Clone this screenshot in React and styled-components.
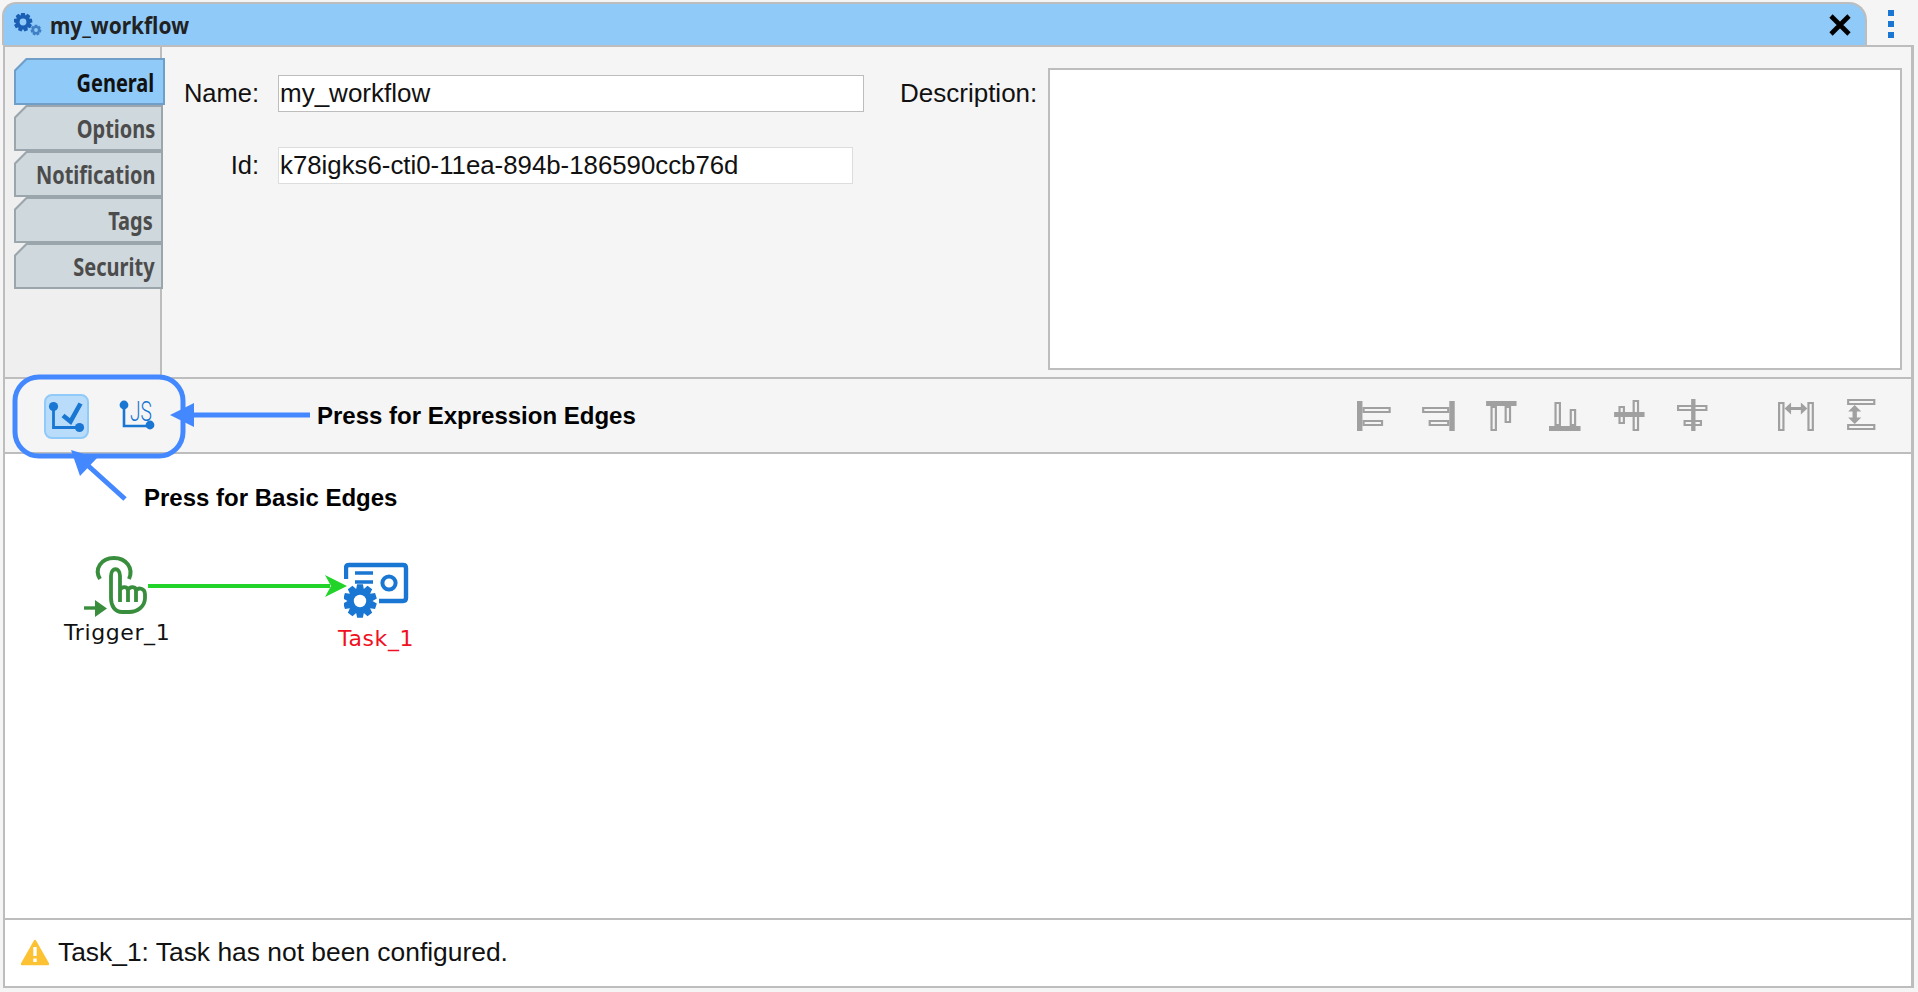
import React from "react";
import styled, { createGlobalStyle } from "styled-components";

const GlobalStyle = createGlobalStyle`
  html, body {
    margin: 0;
    padding: 0;
    background: #f5f5f5;
    font-family: "Liberation Sans", Arial, sans-serif;
  }
`;

const Page = styled.div`
  position: relative;
  width: 1918px;
  height: 992px;
  padding: 2px 4px 4px 3px;
  box-sizing: border-box;
  overflow: hidden;
`;

const TitleRow = styled.div`
  display: flex;
  align-items: flex-start;
`;

const TitleTab = styled.div`
  display: flex;
  align-items: center;
  box-sizing: border-box;
  width: 1865px;
  height: 43px;
  margin-left: -1px;
  padding: 0 13px 0 10px;
  background: #90caf9;
  border: 2px solid #bdbdbd;
  border-bottom: 0;
  border-radius: 14px 18px 0 0;
`;

const TitleText = styled.span`
  margin-left: 8px;
  font-family: "Noto Sans", sans-serif;
  font-size: 24px;
  font-weight: 700;
  color: #212121;
  transform: scaleX(0.87);
  transform-origin: left center;
`;

const CloseIcon = styled.svg`
  margin-left: auto;
`;

const MenuDots = styled.div`
  display: flex;
  flex-direction: column;
  gap: 5px;
  margin: 8px 0 0 21px;
`;

const MenuDot = styled.span`
  width: 6px;
  height: 6px;
  background: #1976d2;
`;

const Panel = styled.div`
  box-sizing: border-box;
  height: 943px;
  display: flex;
  flex-direction: column;
  border: 2px solid #bdbdbd;
  border-right-width: 3px;
`;

const Properties = styled.div`
  display: flex;
  height: 330px;
  flex: none;
  border-bottom: 2px solid #bdbdbd;
  background: #f5f5f5;
`;

const TabColumn = styled.div`
  box-sizing: border-box;
  width: 157px;
  flex: none;
  padding: 11px 0 0 9px;
  background: #efefef;
  border-right: 2px solid #bdbdbd;
`;

const Tab = styled.div`
  position: relative;
  display: flex;
  align-items: center;
  justify-content: flex-end;
  box-sizing: border-box;
  width: ${(p) => (p.$active ? "151px" : "149px")};
  height: ${(p) => (p.$active ? "47px" : "46px")};
  padding-right: ${(p) => p.$pad || 8}px;
  background: ${(p) => (p.$active ? "#6f9fc8" : "#9aa6ab")};
  clip-path: polygon(12px 0, 100% 0, 100% 100%, 0 100%, 0 12px);
  font-family: "Noto Sans", sans-serif;
  font-size: 25px;
  font-weight: 700;
  color: ${(p) => (p.$active ? "#111111" : "#4c4c4c")};

  &::before {
    content: "";
    position: absolute;
    inset: 2px;
    background: ${(p) => (p.$active ? "#90caf9" : "#cfd8dc")};
    clip-path: polygon(11px 0, 100% 0, 100% 100%, 0 100%, 0 11px);
  }
`;

const TabLabel = styled.span`
  position: relative;
  transform: scaleX(0.8);
  transform-origin: right center;
`;

const Form = styled.div`
  display: grid;
  grid-template-columns: 97px 586px;
  grid-auto-rows: 37px;
  row-gap: 35px;
  align-items: center;
  padding-top: 28px;
  column-gap: 19px;
`;

const Label = styled.label`
  font-size: 25.5px;
  color: #111111;
  text-align: right;
  white-space: nowrap;
`;

const Field = styled.div`
  box-sizing: border-box;
  width: ${(p) => p.$width}px;
  height: 37px;
  line-height: 35px;
  padding-left: 1px;
  background: #ffffff;
  border: 1px solid ${(p) => (p.$light ? "#dddddd" : "#bdbdbd")};
  font-size: ${(p) => (p.$light ? 25.8 : 26)}px;
  color: #111111;
  white-space: nowrap;
`;

const DescriptionBlock = styled.div`
  display: flex;
  align-items: flex-start;
  margin-left: 36px;
  padding-top: 21px;
  gap: 11px;
`;

const DescriptionLabel = styled(Label)`
  margin-top: 10px;
  font-size: 26px;
`;

const DescriptionBox = styled.div`
  box-sizing: border-box;
  width: 854px;
  height: 302px;
  background: #ffffff;
  border: 2px solid #bdbdbd;
`;

const Toolbar = styled.div`
  display: flex;
  align-items: center;
  flex: none;
  height: 73px;
  padding: 0 0 0 39px;
  background: #f5f5f5;
  border-bottom: 2px solid #bdbdbd;
`;

const EdgeButton = styled.div`
  display: flex;
  align-items: center;
  justify-content: center;
  box-sizing: border-box;
  width: 45px;
  height: 45px;
  margin-top: 2px;
  margin-left: ${(p) => (p.$active ? 0 : 24)}px;
  border-radius: 8px;
  background: ${(p) => (p.$active ? "#b9dcfb" : "transparent")};
  border: 2px solid ${(p) => (p.$active ? "#90caf9" : "transparent")};
`;

const AlignGroup = styled.div`
  display: flex;
  gap: 27px;
  margin-left: auto;
  margin-right: 28px;
`;

const AlignIcon = styled.svg`
  margin-left: ${(p) => p.$gap || 0}px;
`;

const Canvas = styled.div`
  position: relative;
  flex: 1;
  background: #ffffff;
`;

const Node = styled.div`
  position: absolute;
  left: ${(p) => p.$x}px;
  top: ${(p) => p.$y}px;
  line-height: 0;
`;

const NodeLabel = styled.div`
  position: absolute;
  left: ${(p) => p.$x}px;
  top: ${(p) => p.$y}px;
  font-family: "DejaVu Sans", sans-serif;
  font-size: 22px;
  letter-spacing: 0.6px;
  white-space: nowrap;
  color: ${(p) => (p.$error ? "#f01022" : "#111111")};
`;

const Status = styled.div`
  display: flex;
  align-items: center;
  flex: none;
  gap: 9px;
  box-sizing: border-box;
  height: 68px;
  padding: 0 0 2px 16px;
  background: #ffffff;
  border-top: 2px solid #bdbdbd;
  font-size: 26.4px;
  color: #111111;
`;

const Overlay = styled.svg`
  position: absolute;
  left: 0;
  top: 0;
  pointer-events: none;
`;

const Callout = styled.div`
  position: absolute;
  left: ${(p) => p.$x}px;
  top: ${(p) => p.$y}px;
  font-size: 24px;
  font-weight: 700;
  color: #000000;
  white-space: nowrap;
`;

// gear outline, used in the title bar and on the task node
const gearPath = (cx, cy, outer, inner, teeth) => {
  const pts = [];
  const step = (Math.PI * 2) / teeth;
  for (let i = 0; i < teeth; i++) {
    const a = i * step - Math.PI / 2;
    [
      [-0.5, inner],
      [-0.27, outer],
      [0.27, outer],
      [0.5, inner],
    ].forEach(([o, r]) => {
      const t = a + o * step;
      pts.push(`${(cx + Math.cos(t) * r).toFixed(2)} ${(cy + Math.sin(t) * r).toFixed(2)}`);
    });
  }
  return `M${pts.join("L")}Z`;
};

const alignIcons = [
  { solid: [[0, 2, 5, 30]], open: [[5, 8, 26, 6], [5, 21, 19, 6]] },
  { solid: [[26, 2, 5, 30]], open: [[1, 8, 25, 6], [7, 21, 19, 6]] },
  { solid: [[1, 2, 28, 5]], open: [[5, 7, 6, 25], [18, 7, 6, 17]] },
  { solid: [[0, 27, 29, 5]], open: [[5, 3, 6, 24], [19, 10, 6, 17]] },
  { solid: [[1, 13, 28, 5]], open: [[5, 7, 6, 18], [18, 1, 6, 31]] },
  { solid: [[13, 0, 4, 32]], open: [[0, 6, 28, 6], [6, 21, 17, 6]] },
  {
    gap: 37,
    solid: [],
    open: [[0, 3, 6, 29], [27, 3, 6, 29]],
    arrow: "M6 9.5L12 3.5V8H21V3.5L27 9.5L21 15.5V11H12V15.5Z",
  },
  {
    gap: 4,
    solid: [],
    open: [[1, 0, 26, 6], [1, 25, 26, 6]],
    arrow: "M8 6L14 12.5H10V18.5H14L8 25L2 18.5H6V12.5H2Z",
  },
];

const GRAY = "#a0a0a0";

const AlignButton = ({ icon }) => (
  <AlignIcon
    width="37"
    height="33"
    viewBox="0 0 34 33"
    preserveAspectRatio="none"
    $gap={icon.gap}
  >
    {icon.open.map(([x, y, w, h]) => (
      <rect
        key={`${x}-${y}`}
        x={x + 1}
        y={y + 1}
        width={w - 2}
        height={h - 2}
        fill="#f5f5f5"
        stroke={GRAY}
        strokeWidth="2"
      />
    ))}
    {icon.solid.map(([x, y, w, h]) => (
      <rect key={`${x}-${y}`} x={x} y={y} width={w} height={h} fill={GRAY} />
    ))}
    {icon.arrow && <path d={icon.arrow} fill={GRAY} />}
  </AlignIcon>
);

const BasicEdgeIcon = () => (
  <svg width="38" height="38" viewBox="0 0 38 38" fill="none">
    <circle cx="5.5" cy="8.5" r="4.6" fill="#1976d2" />
    <circle cx="31.5" cy="29.5" r="4.6" fill="#1976d2" />
    <path d="M5.5 9V29.5H31" stroke="#1976d2" strokeWidth="2.8" />
    <path d="M15 17.5L22.5 23.5L32.5 5.5" stroke="#1976d2" strokeWidth="4.6" />
  </svg>
);

const JsEdgeIcon = () => (
  <svg width="38" height="38" viewBox="0 0 38 38" fill="none" overflow="visible">
    <circle cx="7" cy="7" r="4.4" fill="#1976d2" />
    <circle cx="33" cy="27" r="4.4" fill="#1976d2" />
    <path d="M7 8V28H32" stroke="#1976d2" strokeWidth="2.6" />
    <text
      x="13"
      y="23"
      fontFamily="Roboto, sans-serif"
      fontSize="27"
      fontWeight="300"
      textLength="22"
      lengthAdjust="spacingAndGlyphs"
      fill="#1976d2"
    >
      JS
    </text>
  </svg>
);

const TriggerIcon = () => (
  <svg width="70" height="70" viewBox="0 0 70 70" fill="none" stroke="#388e3c">
    <path d="M16 27C10 17 17 6 30 6C42 6 50 16 45 27" strokeWidth="4" />
    <path
      d="M27 44V24C27 15 36 15 36 24V50M36 38C38 34 44 34 44 39V50M44 38C46 34 52 34 52 39V50M52 39C54 35 61 36 61 42V46C61 54 54 60 45 60H38C31 60 27 54 27 46V44"
      strokeWidth="3.8"
    />
    <path d="M0 56H14" strokeWidth="3.4" />
    <path d="M11 48L23 56.5L11 65Z" fill="#388e3c" stroke="none" />
  </svg>
);

const TaskIcon = () => (
  <svg width="70" height="62" viewBox="0 0 70 62" fill="none" stroke="#1976d2">
    <path d="M2 17V6Q2 3 5 3H59Q62 3 62 6V36Q62 39 59 39H35" strokeWidth="4.4" />
    <path d="M11 11H29M11 20H29" strokeWidth="3.6" />
    <circle cx="45" cy="21" r="6.6" strokeWidth="4" />
    <path d={gearPath(16, 39, 17, 12.5, 10)} fill="#1976d2" stroke="none" />
    <circle cx="16" cy="39" r="6.2" fill="#ffffff" stroke="none" />
  </svg>
);

const App = () => (
  <Page>
    <GlobalStyle />
    <TitleRow>
      <TitleTab>
        <svg width="28" height="24" viewBox="0 0 28 24">
          <path d={gearPath(9, 9, 9.5, 7, 9)} fill="#1a5fb4" />
          <circle cx="9" cy="9" r="3.4" fill="#90caf9" />
          <path d={gearPath(22, 17, 5.5, 4, 7)} fill="#3f7fc4" />
          <circle cx="22" cy="17" r="1.9" fill="#90caf9" />
        </svg>
        <TitleText>my_workflow</TitleText>
        <CloseIcon width="24" height="24" viewBox="0 0 24 24">
          <path d="M3 3L21 21M21 3L3 21" stroke="#000000" strokeWidth="4.6" />
        </CloseIcon>
      </TitleTab>
      <MenuDots>
        <MenuDot />
        <MenuDot />
        <MenuDot />
      </MenuDots>
    </TitleRow>
    <Panel>
      <Properties>
        <TabColumn>
          <Tab $active $pad={11}>
            <TabLabel>General</TabLabel>
          </Tab>
          <Tab>
            <TabLabel>Options</TabLabel>
          </Tab>
          <Tab>
            <TabLabel>Notification</TabLabel>
          </Tab>
          <Tab $pad={10}>
            <TabLabel>Tags</TabLabel>
          </Tab>
          <Tab>
            <TabLabel>Security</TabLabel>
          </Tab>
        </TabColumn>
        <Form>
          <Label>Name:</Label>
          <Field $width={586}>my_workflow</Field>
          <Label>Id:</Label>
          <Field $width={575} $light>
            k78igks6-cti0-11ea-894b-186590ccb76d
          </Field>
        </Form>
        <DescriptionBlock>
          <DescriptionLabel>Description:</DescriptionLabel>
          <DescriptionBox />
        </DescriptionBlock>
      </Properties>
      <Toolbar>
        <EdgeButton $active>
          <BasicEdgeIcon />
        </EdgeButton>
        <EdgeButton>
          <JsEdgeIcon />
        </EdgeButton>
        <AlignGroup>
          {alignIcons.map((icon, i) => (
            <AlignButton key={i} icon={icon} />
          ))}
        </AlignGroup>
      </Toolbar>
      <Canvas>
        <Node $x={79} $y={98}>
          <TriggerIcon />
        </Node>
        <NodeLabel $x={59} $y={166}>
          Trigger_1
        </NodeLabel>
        <Node $x={339} $y={108}>
          <TaskIcon />
        </Node>
        <NodeLabel $x={333} $y={172} $error>
          Task_1
        </NodeLabel>
        <Overlay width="400" height="200">
          <path d="M143 132H325" stroke="#22d42a" strokeWidth="4" />
          <path d="M320 121L342 132L320 143L326 132Z" fill="#22d42a" />
        </Overlay>
      </Canvas>
      <Status>
        <svg width="28" height="27" viewBox="0 0 28 27">
          <path
            d="M14 2L27 25H1Z"
            fill="#fcc233"
            stroke="#fcc233"
            strokeWidth="2.4"
            strokeLinejoin="round"
          />
          <path d="M14 8V17M14 19.5V23" stroke="#ffffff" strokeWidth="3.4" />
        </svg>
        Task_1: Task has not been configured.
      </Status>
    </Panel>
    <Overlay width="400" height="520" fill="none">
      <rect x="15" y="377" width="168" height="79" rx="24" stroke="#4488ff" strokeWidth="5" />
      <path d="M310 415H190" stroke="#4488ff" strokeWidth="5" />
      <path d="M170 415L194 403V427Z" fill="#4488ff" />
      <path d="M125 499L84 462" stroke="#4488ff" strokeWidth="5" />
      <path d="M71 450L97 458L80 476Z" fill="#4488ff" />
    </Overlay>
    <Callout $x={317} $y={402}>
      Press for Expression Edges
    </Callout>
    <Callout $x={144} $y={484}>
      Press for Basic Edges
    </Callout>
  </Page>
);

export default App;
